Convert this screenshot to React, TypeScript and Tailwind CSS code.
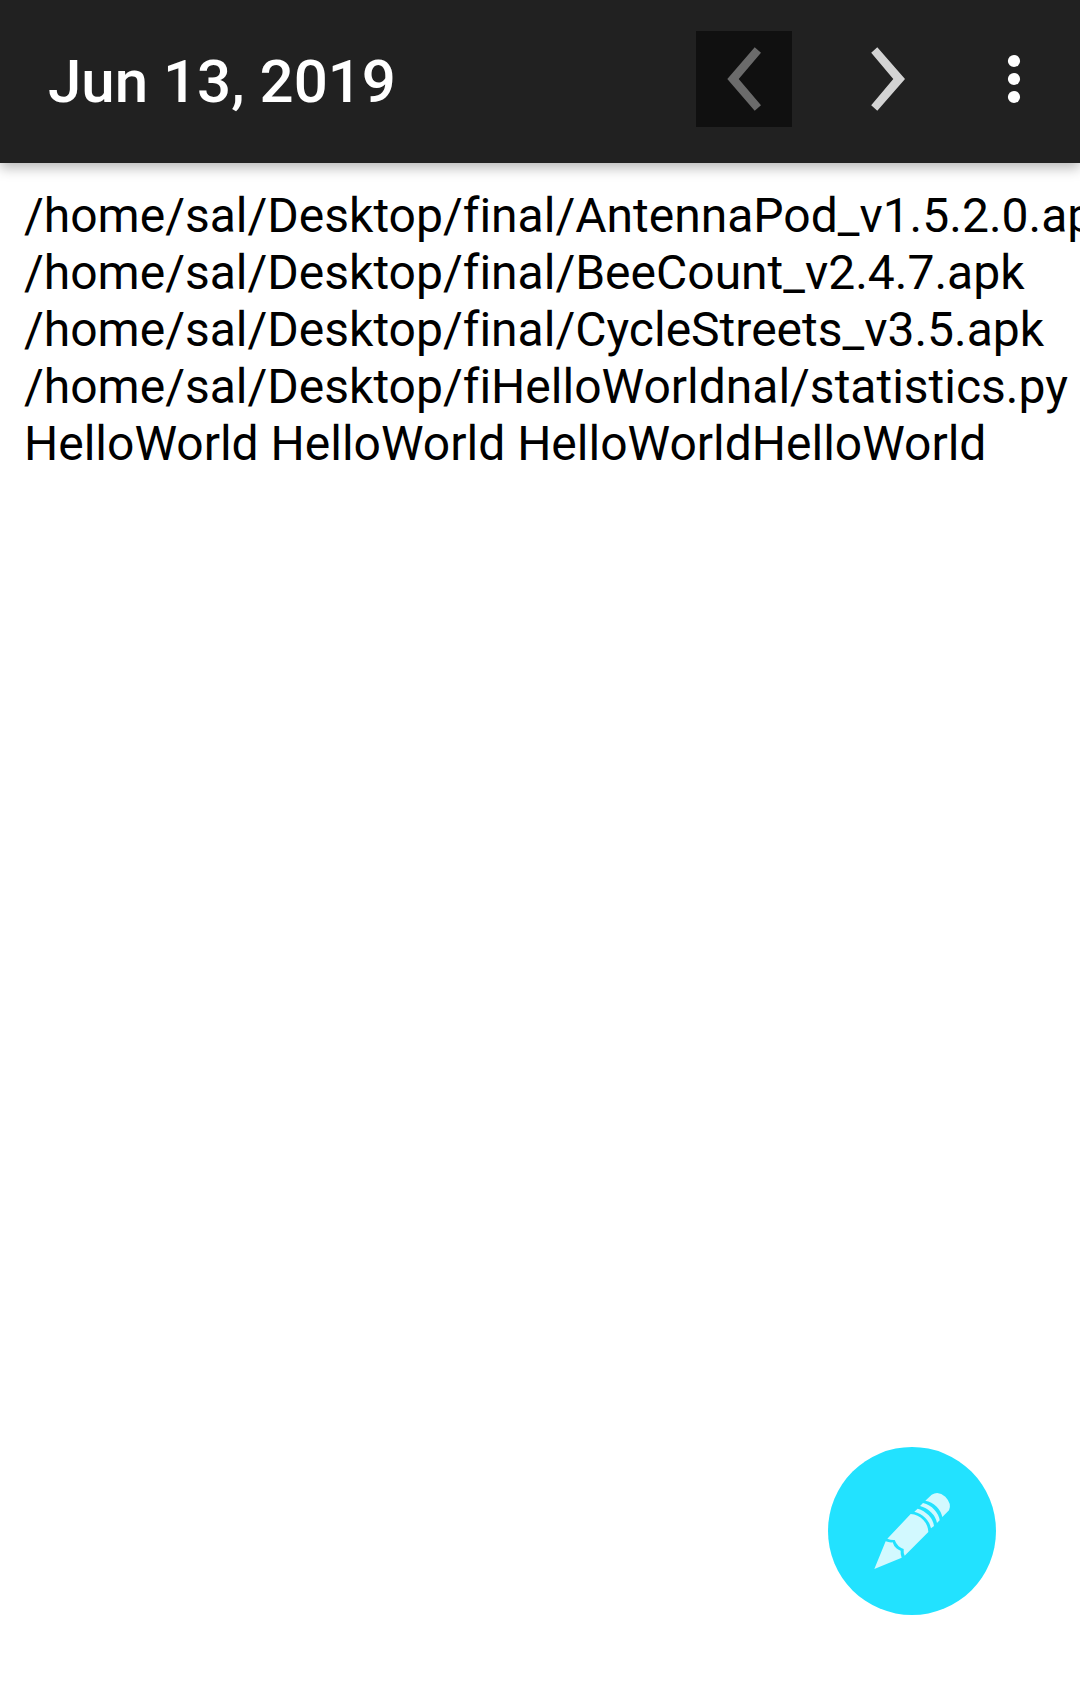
const lines = [
  '/home/sal/Desktop/final/AntennaPod_v1.5.2.0.apk',
  '/home/sal/Desktop/final/BeeCount_v2.4.7.apk',
  '/home/sal/Desktop/final/CycleStreets_v3.5.apk',
  '/home/sal/Desktop/fiHelloWorldnal/statistics.py',
  'HelloWorld HelloWorld HelloWorldHelloWorld',
];

export default function App() {
  return (
    <div className="flex min-h-screen flex-col overflow-x-hidden bg-white font-[Roboto,sans-serif] text-black [font-variant-ligatures:none]">
      <header className="flex items-start bg-[#212121] pt-[31px] pr-[18px] pb-[31px] pl-12 text-white shadow-[0_5px_12px_rgba(0,0,0,0.28)]">
        <h1 className="grow text-[60px] leading-[101px] font-medium">Jun 13, 2019</h1>
        <div className="flex shrink-0">
          <button type="button" disabled aria-label="Previous day" className="size-24 bg-[#101010] text-[#6b6b6b]">
            <svg viewBox="0 0 96 96" className="size-24" fill="currentColor" aria-hidden="true">
              <path d="M31.3 48 58.7 16.3 65 21.7 42.7 48 65 74.3 58.7 79.7Z" />
            </svg>
          </button>
          <button type="button" aria-label="Next day" className="ml-12 size-24 text-[#d3d3d3]">
            <svg viewBox="0 0 96 96" className="size-24" fill="currentColor" aria-hidden="true">
              <path d="M65 48 37.3 16.3 31.2 21.7 53.3 48 31.2 74.3 37.3 79.7Z" />
            </svg>
          </button>
          <button type="button" aria-label="More options" className="ml-[30px] size-24 text-white">
            <svg viewBox="0 0 96 96" className="size-24" fill="currentColor" aria-hidden="true">
              <circle cx="48" cy="30" r="6.1" />
              <circle cx="48" cy="48" r="6.1" />
              <circle cx="48" cy="66" r="6.1" />
            </svg>
          </button>
        </div>
      </header>
      <main className="px-6 pt-6 text-[48px] leading-[57px] whitespace-pre">
        {lines.map((line) => (
          <p key={line}>{line}</p>
        ))}
      </main>
      <button
        type="button"
        aria-label="Edit"
        className="fixed right-[84px] bottom-[84px] flex size-[168px] items-center justify-center rounded-full bg-[#22e2ff] text-[#d2f9ff]"
      >
        <svg viewBox="0 -3 312 312" className="size-[104px]" fill="currentColor" aria-hidden="true">
          <path d="M43 267 77 184Q87 188 98 187Q101 198 109 205Q116 211 122 212Q121 223 125 233Z" />
          <path d="M82 176 152 102Q174 104 190 120Q204 135 205 156L134 227Q130 219 131 207Q124 206 116 199Q108 191 104 180Q93 181 82 176Z" />
          <path d="M163 95 173 86Q192 91 206 106Q220 121 222 138L213 145Q209 127 196 114Q181 99 163 95Z" />
          <path d="M180 78 189 69Q209 74 223 89Q237 104 239 121L231 129Q227 110 213 97Q198 82 180 78Z" />
          <path d="M196 62 215 44Q236 32 256 50Q276 71 267 91L247 111Q243 93 230 80Q215 65 196 62Z" />
        </svg>
      </button>
    </div>
  );
}
